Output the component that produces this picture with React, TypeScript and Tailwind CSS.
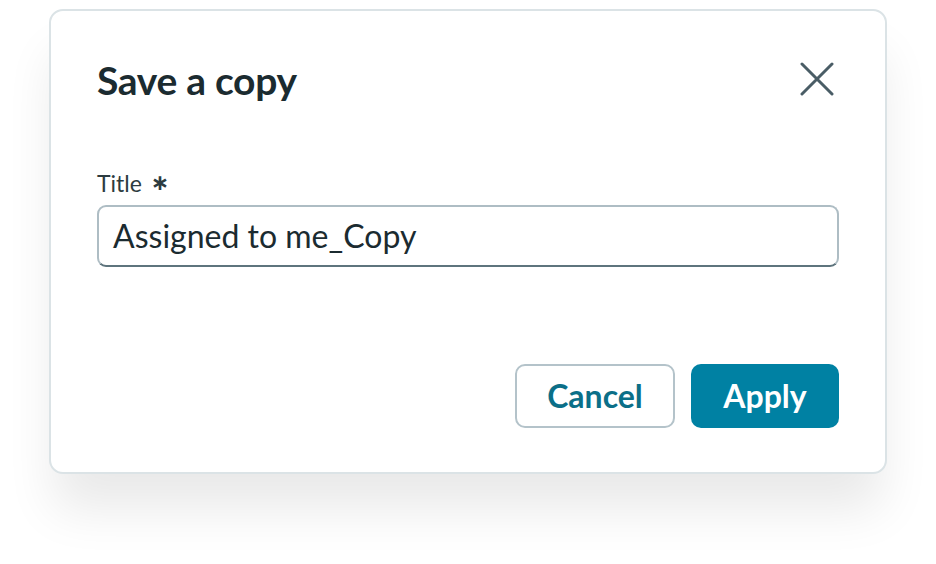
import React from "react";

export default function App() {
  return (
    <div className="w-[936px] h-[564px] bg-white" style={{ fontFamily: "Lato, 'Noto Sans', sans-serif" }}>
      <div className="pt-[9px] pl-[49px]">
        <div className="w-[838px] h-[465px] bg-white border-2 border-[#dbe3e6] rounded-[14px] shadow-[0_40px_50px_-5px_rgba(0,0,0,0.09)] flex flex-col px-[46px] pt-[45px]">
          <div className="flex items-start justify-between h-[48px]">
            <h1 className="text-[39px] leading-[48px] font-bold text-[#1b2b30] tracking-[-0.3px]">Save a copy</h1>
            <button className="mt-[6px] mr-[5px] text-[#4a5d66]">
              <svg width="34" height="34" viewBox="0 0 34 34" fill="none" stroke="currentColor" strokeWidth="3" strokeLinecap="round">
                <path d="M2 2 L32 32 M32 2 L2 32" />
              </svg>
            </button>
          </div>
          <label className="mt-[63px] h-[32px] text-[23px] leading-[32px] text-[#2c3b40] flex items-center">
            <span>Title</span>
            <span className="ml-[9px] text-[22px] font-bold text-[#2c3b40]" style={{ fontFamily: "'DejaVu Sans', sans-serif" }}>∗</span>
          </label>
          <div className="mt-[6px] h-[62px] rounded-[9px] border-2 border-[#aebdc4] border-b-[#5e747d] flex items-center px-[14px]">
            <span className="text-[32px] text-[#1b2b30]">Assigned to me_Copy</span>
          </div>
          <div className="mt-[97px] flex justify-end gap-[16px]">
            <button className="w-[160px] h-[64px] rounded-[10px] border-2 border-[#b4c3ca] bg-white text-[32px] font-bold text-[#0b6f88]">
              Cancel
            </button>
            <button className="w-[148px] h-[64px] rounded-[10px] bg-[#0081a3] text-[32px] font-bold text-white">
              Apply
            </button>
          </div>
        </div>
      </div>
    </div>
  );
}
